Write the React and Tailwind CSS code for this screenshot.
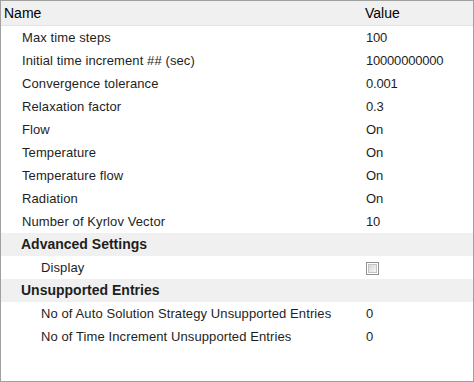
import React from "react";

const rows = [
  { name: "Max time steps", value: "100", indent: 1 },
  { name: "Initial time increment ## (sec)", value: "10000000000", indent: 1 },
  { name: "Convergence tolerance", value: "0.001", indent: 1 },
  { name: "Relaxation factor", value: "0.3", indent: 1 },
  { name: "Flow", value: "On", indent: 1 },
  { name: "Temperature", value: "On", indent: 1 },
  { name: "Temperature flow", value: "On", indent: 1 },
  { name: "Radiation", value: "On", indent: 1 },
  { name: "Number of Kyrlov Vector", value: "10", indent: 1 },
  { name: "Advanced Settings", group: true },
  { name: "Display", checkbox: true, indent: 2 },
  { name: "Unsupported Entries", group: true },
  { name: "No of Auto Solution Strategy Unsupported Entries", value: "0", indent: 2 },
  { name: "No of Time Increment Unsupported Entries", value: "0", indent: 2 },
];

export default function App() {
  return (
    <div
      className="w-[474px] h-[382px] border border-[#a0a0a0] bg-white flex flex-col text-[13px] text-[#1e1e1e]"
      style={{ fontFamily: '"Liberation Sans", Arial, sans-serif' }}
    >
      <div className="h-[25px] shrink-0 flex items-center bg-[#f0f0f0] border-b border-[#e3e3e3] text-[14px] text-black">
        <div className="w-[364px] pl-[3px]">Name</div>
        <div>Value</div>
      </div>
      {rows.map((r, i) =>
        r.group ? (
          <div key={i} className="h-[23px] shrink-0 flex items-center bg-[#f0f0f0] font-bold text-[14px]">
            <div className="pl-[20px]">{r.name}</div>
          </div>
        ) : (
          <div key={i} className="h-[23px] shrink-0 flex items-center">
            <div className={`w-[365px] shrink-0 tracking-[0.1px] ${r.indent === 2 ? "pl-[40px]" : "pl-[21px]"}`}>{r.name}</div>
            <div className="tracking-[-0.2px]">
              {r.checkbox ? (
                <div className="w-[13px] h-[13px] border border-[#8f8f8f] bg-white p-[1px] mt-[1px]">
                  <div className="w-full h-full border border-[#c4c4c4] bg-gradient-to-br from-[#d8d8d8] to-[#f4f4f4]" />
                </div>
              ) : (
                r.value
              )}
            </div>
          </div>
        )
      )}
    </div>
  );
}
